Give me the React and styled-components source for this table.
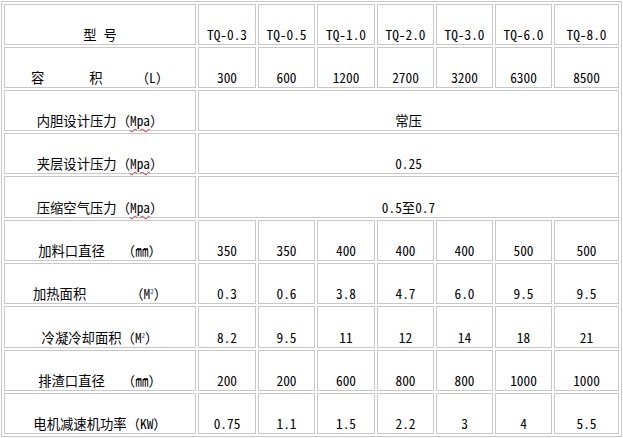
import styled, { createGlobalStyle } from "styled-components"

const GlobalStyle = createGlobalStyle`
  html, body {
    margin: 0;
    padding: 0;
    background: #fff;
  }
  body {
    font-family: "Noto Sans Mono CJK SC", "Noto Sans CJK SC", sans-serif;
    font-size: 13.33px;
    color: #000;
  }
`

const Sheet = styled.table`
  margin: 1px 0 0 1px;
  width: 621px;
  border: 1px solid #c8c8c8;
  border-collapse: separate;
  border-spacing: 2px;
  table-layout: fixed;
`

const Col = styled.col`
  width: ${(p) => p.$w}px;
`

const Row = styled.tr`
  height: ${(p) => p.$h}px;
`

const Cell = styled.td`
  box-sizing: border-box;
  border: 1px solid #c8c8c8;
  padding: 0 0 1px;
  text-align: center;
  vertical-align: bottom;
  line-height: 16px;
  white-space: nowrap;
`

const Gap = styled.span`
  display: inline-block;
  width: ${(p) => p.$w}px;
`

const Squiggle = styled.span`
  text-decoration: underline wavy #e02020;
  text-decoration-thickness: 1px;
  text-underline-offset: 2px;
`

const Sup = styled.sup`
  font-size: 7px;
  line-height: 0;
  vertical-align: 5px;
  color: #1a3fa0;
`

const Mpa = () => (
  <>
    （<Squiggle>Mpa</Squiggle>）
  </>
)

const M2 = () => (
  <>
    （M<Sup>2</Sup>）
  </>
)

const widths = [192, 58, 57, 58, 57, 57, 57, 65]

const models = ["TQ-0.3", "TQ-0.5", "TQ-1.0", "TQ-2.0", "TQ-3.0", "TQ-6.0", "TQ-8.0"]

const rows = [
  {
    label: (
      <>
        容<Gap $w={45} />积<Gap $w={33} />（L）
      </>
    ),
    values: ["300", "600", "1200", "2700", "3200", "6300", "8500"],
  },
  { label: <>内胆设计压力<Mpa /></>, merged: "常压" },
  { label: <>夹层设计压力<Mpa /></>, merged: "0.25" },
  { label: <>压缩空气压力<Mpa /></>, merged: "0.5至0.7", h: 42 },
  {
    label: <>加料口直径<Gap $w={17} />（㎜）</>,
    values: ["350", "350", "400", "400", "400", "500", "500"],
  },
  {
    label: <>加热面积<Gap $w={44} /><M2 /></>,
    values: ["0.3", "0.6", "3.8", "4.7", "6.0", "9.5", "9.5"],
  },
  {
    label: <>冷凝冷却面积<M2 /></>,
    values: ["8.2", "9.5", "11", "12", "14", "18", "21"],
    h: 42,
  },
  {
    label: <>排渣口直径<Gap $w={17} />（㎜）</>,
    values: ["200", "200", "600", "800", "800", "1000", "1000"],
  },
  {
    label: <>电机减速机功率（KW）</>,
    values: ["0.75", "1.1", "1.5", "2.2", "3", "4", "5.5"],
  },
]

const App = () => (
  <>
    <GlobalStyle />
    <Sheet>
      <colgroup>
        {widths.map((w, i) => (
          <Col key={i} $w={w} />
        ))}
      </colgroup>
      <tbody>
        <Row $h={41}>
          <Cell>
            型<Gap $w={7} />号
          </Cell>
          {models.map((m) => (
            <Cell key={m}>{m}</Cell>
          ))}
        </Row>
        {rows.map((row, i) => (
          <Row key={i} $h={row.h || 41}>
            <Cell>{row.label}</Cell>
            {row.merged ? (
              <Cell colSpan={7}>{row.merged}</Cell>
            ) : (
              row.values.map((v, j) => <Cell key={j}>{v}</Cell>)
            )}
          </Row>
        ))}
      </tbody>
    </Sheet>
  </>
)

export default App
